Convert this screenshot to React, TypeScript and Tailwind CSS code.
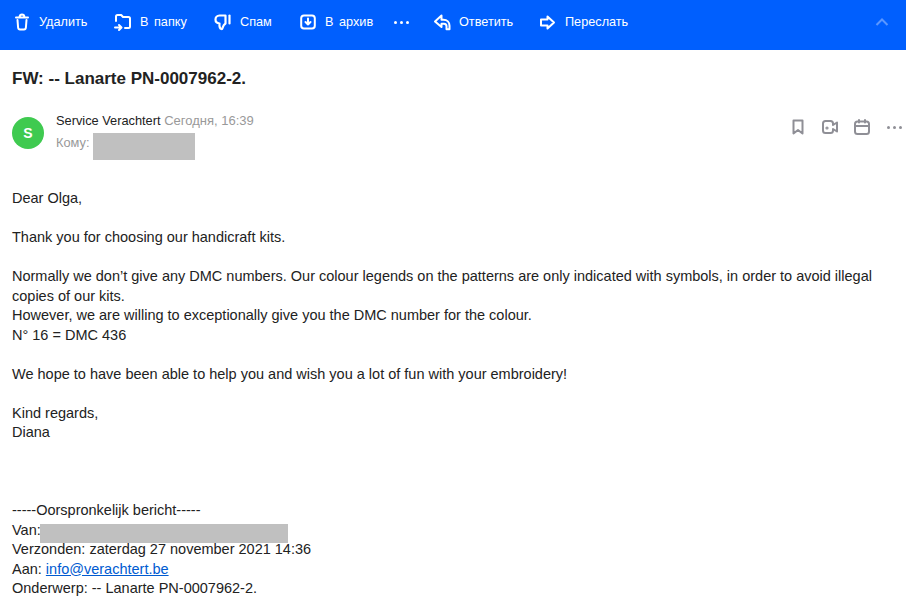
import React from 'react';

const font = "font-['Liberation_Sans',Arial,sans-serif]";

function TrashIcon() {
  return (
    <svg width="20" height="20" viewBox="0 0 20 20" fill="none" stroke="currentColor" strokeWidth="2" strokeLinecap="round" strokeLinejoin="round">
      <path d="M4 5.5h12M7.5 5c.2-1.600 1-2.500 2.500-2.500s2.300.9 2.500 2.500" />
      <path d="M5.500 8l.6 7.500c.1 1.200.8 2 1.900 2h4c1.100 0 1.800-.8 1.900-2l.6-7.500" />
    </svg>
  );
}

function FolderMoveIcon() {
  return (
    <svg width="20" height="20" viewBox="0 0 20 20" fill="none" stroke="currentColor" strokeWidth="2" strokeLinecap="round" strokeLinejoin="round">
      <path d="M3 9V4.500C3 3.500 3.500 3 4.500 3h3.700l1.800 2h5.500c1 0 1.500.5 1.500 1.500v8c0 1-.5 1.500-1.500 1.500H12" />
      <path d="M2 15.500h6M6 13l2.500 2.500L6 18" />
    </svg>
  );
}

function SpamIcon() {
  return (
    <svg width="20" height="20" viewBox="0 0 20 20" fill="none" stroke="currentColor" strokeWidth="2.200" strokeLinecap="round" strokeLinejoin="round">
      <path d="M12.500 3.500H6.500C4 3.500 2.500 5.500 2.500 7.500c0 2.500 1.700 3.800 4 4-.2 2 .3 5 2 5.500.8.200 1-.8 1.300-1.700.5-1.800 1.500-3 2.700-3.800V3.500z" />
      <path d="M16.500 3.500v8" />
    </svg>
  );
}

function ArchiveIcon() {
  return (
    <svg width="20" height="20" viewBox="0 0 20 20" fill="none" stroke="currentColor" strokeWidth="2" strokeLinecap="round" strokeLinejoin="round">
      <path d="M6 3.500h8c1.700 0 2.800 1.100 2.800 2.800v7.400c0 1.700-1.100 2.800-2.800 2.800H6c-1.700 0-2.800-1.100-2.800-2.800V6.300C3.200 4.600 4.300 3.500 6 3.500z" />
      <path d="M10 6.500v6M7.500 10l2.500 2.500 2.500-2.500" />
    </svg>
  );
}

function ReplyIcon() {
  return (
    <svg width="20" height="20" viewBox="0 0 20 20" fill="none" stroke="currentColor" strokeWidth="2" strokeLinecap="round" strokeLinejoin="round">
      <path d="M9.500 3.500L3 9.500l6.500 5.500v-3.200h2.500c1.500 0 2.500 1 2.500 2.500v3h3v-3.500c0-3.500-2.500-6-6-6H9.500V3.500z" />
    </svg>
  );
}

function ForwardIcon() {
  return (
    <svg width="20" height="20" viewBox="0 0 20 20" fill="none" stroke="currentColor" strokeWidth="2" strokeLinejoin="round" strokeLinecap="round">
      <path d="M10.500 4.500L17 10.500l-6.500 6v-3H4v-6h6.500v-3z" />
    </svg>
  );
}

function Dots({ className }: { className: string }) {
  return (
    <span className={`flex items-center gap-[3px] ${className}`}>
      <span className="w-[3px] h-[3px] rounded-full bg-current" />
      <span className="w-[3px] h-[3px] rounded-full bg-current" />
      <span className="w-[3px] h-[3px] rounded-full bg-current" />
    </span>
  );
}

function ToolbarItem({ icon, label, className }: { icon: React.ReactNode; label: string; className: string }) {
  return (
    <div className={`flex items-center ${className}`}>
      {icon}
      <span className="text-[12.7px] leading-[20px] [word-spacing:2px]">{label}</span>
    </div>
  );
}

function Redacted({ className }: { className: string }) {
  return <span className={`inline-block bg-[#c0c0c0] ${className}`} />;
}

export default function App() {
  return (
    <div className={`w-[906px] h-[615px] overflow-hidden bg-white text-[#222] ${font}`}>
      {/* Toolbar */}
      <div className="h-[50px] bg-[#005ffe] text-white flex items-center pl-[12px] pr-[17px] pb-[6px]">
        <ToolbarItem icon={<TrashIcon />} label="Удалить" className="gap-[7px] w-[101px]" />
        <ToolbarItem icon={<FolderMoveIcon />} label="В папку" className="gap-[7px] w-[100px]" />
        <ToolbarItem icon={<SpamIcon />} label="Спам" className="gap-[7px] w-[85px]" />
        <ToolbarItem icon={<ArchiveIcon />} label="В архив" className="gap-[7px] w-[96px]" />
        <Dots className="text-white w-[38px]" />
        <ToolbarItem icon={<ReplyIcon />} label="Ответить" className="gap-[7px] w-[105px]" />
        <ToolbarItem icon={<ForwardIcon />} label="Переслать" className="gap-[8px]" />
        <svg className="ml-auto text-[#5b97ff]" width="14" height="10" viewBox="0 0 14 10" fill="none" stroke="currentColor" strokeWidth="2">
          <path d="M1.500 8L7 2.500 12.500 8" />
        </svg>
      </div>

      {/* Subject */}
      <h1 className="mt-[18px] ml-[12px] text-[17px] leading-[22px] font-bold">FW: -- Lanarte PN-0007962-2.</h1>

      {/* Sender */}
      <div className="mt-[21px] pl-[12px] pr-[2px] flex items-start">
        <div className="mt-[6px] w-[32px] h-[32px] rounded-full bg-[#3fca50] text-white text-[14px] font-bold flex items-center justify-center">S</div>
        <div className="ml-[12px] text-[12.8px]">
          <div className="leading-[20px]">
            Service Verachtert <span className="text-[#999] text-[13px]">Сегодня, 16:39</span>
          </div>
          <div className="flex items-start text-[#999] mt-[2px]">
            <span className="leading-[20px] w-[37px]">Кому:</span>
            <Redacted className="w-[102px] h-[27px]" />
          </div>
        </div>
        <div className="ml-auto mt-[6px] flex items-center gap-[12px] text-[#8f8f96]">
          <svg width="20" height="20" viewBox="0 0 20 20" fill="none" stroke="currentColor" strokeWidth="2" strokeLinejoin="round">
            <path d="M5.500 3.500h9v13L10 13l-4.500 3.500v-13z" />
          </svg>
          <svg width="20" height="20" viewBox="0 0 20 20" fill="none" stroke="currentColor" strokeWidth="2" strokeLinejoin="round" strokeLinecap="round">
            <path d="M13 8V6.500C13 5 12 4 10.500 4h-5C4 4 3 5 3 6.500v7C3 15 4 16 5.500 16h5c1.500 0 2.500-1 2.500-2.500V12l4 2.500v-9L13 8z" />
            <circle cx="7" cy="11" r=".6" />
          </svg>
          <svg width="20" height="20" viewBox="0 0 20 20" fill="none" stroke="currentColor" strokeWidth="2" strokeLinecap="round" strokeLinejoin="round">
            <rect x="3" y="4.500" width="14" height="12.500" rx="2.500" />
            <path d="M3 9h14M7 3v2.500M13 3v2.500" />
          </svg>
          <Dots className="text-[#8f8f96] w-[20px] justify-center" />
        </div>
      </div>

      {/* Body */}
      <div className="mt-[29px] px-[12px] text-[14.5px] leading-[19.5px] text-[#222]">
        <p>Dear Olga,</p>
        <br />
        <p>Thank you for choosing our handicraft kits.</p>
        <br />
        <p>Normally we don’t give any DMC numbers. Our colour legends on the patterns are only indicated with symbols, in order to avoid illegal copies of our kits.</p>
        <p>However, we are willing to exceptionally give you the DMC number for the colour.</p>
        <p>N° 16 = DMC 436</p>
        <br />
        <p>We hope to have been able to help you and wish you a lot of fun with your embroidery!</p>
        <br />
        <p>Kind regards,</p>
        <p>Diana</p>
        <br />
        <br />
        <br />
        <p>-----Oorspronkelijk bericht-----</p>
        <p className="flex h-[19.5px]"><span className="w-[28px]">Van:</span><Redacted className="w-[248px] h-[19px] mt-[3px]" /></p>
        <p>Verzonden: zaterdag 27 november 2021 14:36</p>
        <p>Aan: <a className="text-[#005bd1] underline">info@verachtert.be</a></p>
        <p>Onderwerp: -- Lanarte PN-0007962-2.</p>
      </div>
    </div>
  );
}
